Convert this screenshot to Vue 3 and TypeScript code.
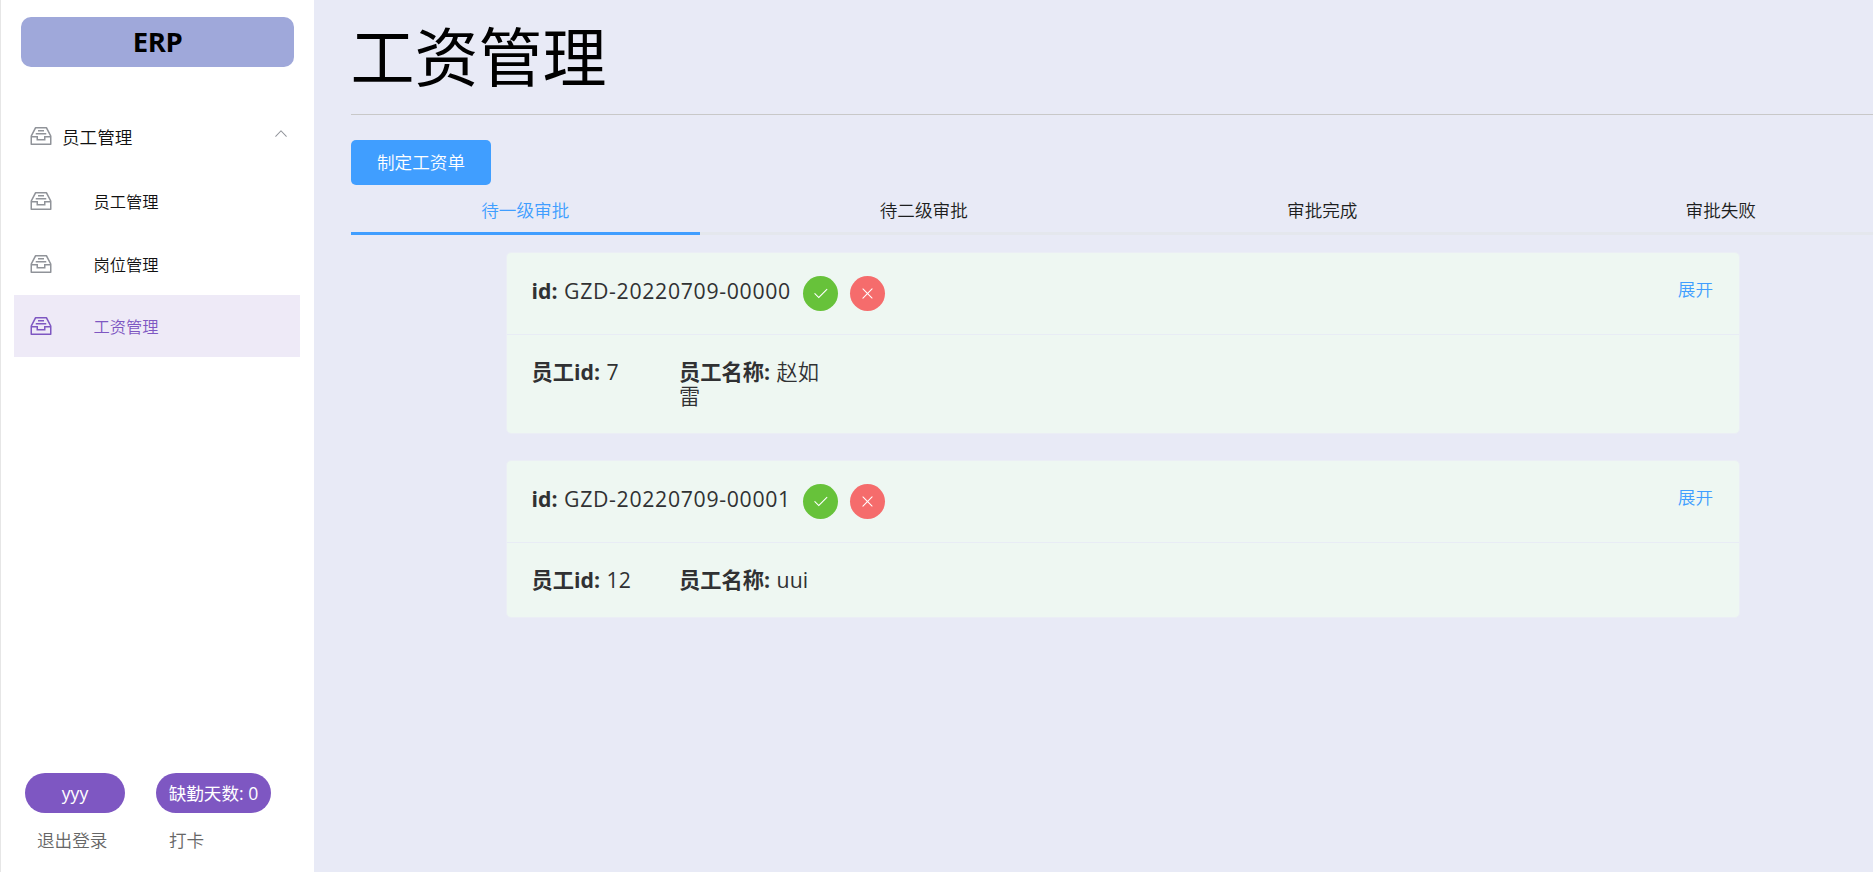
<script setup lang="ts">
interface Slip {
  id: string
  staffId: string
  name: string
}

const menu: { label: string; active: boolean }[] = [
  { label: '员工管理', active: false },
  { label: '岗位管理', active: false },
  { label: '工资管理', active: true },
]
const tabs: string[] = ['待一级审批', '待二级审批', '审批完成', '审批失败']
const slips: Slip[] = [
  { id: 'GZD-20220709-00000', staffId: '7', name: '赵如雷' },
  { id: 'GZD-20220709-00001', staffId: '12', name: 'uui' },
]

const isLatin = (text: string): boolean => /^[\x20-\x7e]+$/.test(text)

const boxPath =
  'M288 384h448v64H288v-64zm96-128h256v64H384v-64zM131.456 512H384v128h256V512h252.544L721.856 192H302.144L131.456 512zM896 576H704v128H320V576H128v256h768V576zM275.776 128h472.448a32 32 0 0 1 28.608 17.664l179.84 359.552A32 32 0 0 1 960 519.552V864a32 32 0 0 1-32 32H96a32 32 0 0 1-32-32V519.552a32 32 0 0 1 3.392-14.336l179.776-359.552A32 32 0 0 1 275.776 128z'
</script>

<template>
  <div class="layout">
    <aside class="sidebar">
      <div class="brand">ERP</div>
      <nav class="menu">
        <div class="menu-title">
          <svg class="box-icon" viewBox="0 0 1024 1024"><path :d="boxPath" /></svg>
          <span class="title-label">员工管理</span>
          <svg class="chevron" viewBox="0 0 1024 1024">
            <path
              d="m488.832 344.32-339.84 356.672a32 32 0 0 0 0 44.16l.384.384a29.44 29.44 0 0 0 42.688 0l320-335.872 319.872 335.872a29.44 29.44 0 0 0 42.688 0l.384-.384a32 32 0 0 0 0-44.16L535.168 344.32a32 32 0 0 0-46.336 0z"
            />
          </svg>
        </div>
        <div v-for="item in menu" :key="item.label" class="menu-item" :class="{ active: item.active }">
          <svg class="box-icon" viewBox="0 0 1024 1024"><path :d="boxPath" /></svg>
          <span class="item-label">{{ item.label }}</span>
        </div>
      </nav>
      <footer class="account">
        <div class="pills">
          <span class="pill user">yyy</span>
          <span class="pill absent">缺勤天数: 0</span>
        </div>
        <div class="links">
          <span class="logout">退出登录</span>
          <span>打卡</span>
        </div>
      </footer>
    </aside>

    <main class="content">
      <h1 class="heading">工资管理</h1>
      <button class="create">制定工资单</button>
      <div class="tabs">
        <div v-for="(tab, i) in tabs" :key="tab" class="tab" :class="{ current: i === 0 }">{{ tab }}</div>
      </div>
      <div class="cards">
        <section v-for="slip in slips" :key="slip.id" class="card">
          <header class="card-head">
            <span class="slip-id"><b>id:</b> <span class="code">{{ slip.id }}</span></span>
            <span class="round approve">
              <svg viewBox="0 0 1024 1024">
                <path
                  d="M406.656 706.944 195.84 496.256a32 32 0 1 0-45.248 45.248l256 256 512-512a32 32 0 0 0-45.248-45.248L406.592 706.944z"
                />
              </svg>
            </span>
            <span class="round reject">
              <svg viewBox="0 0 1024 1024">
                <path
                  d="M764.288 214.592 512 466.88 259.712 214.592a31.936 31.936 0 0 0-45.12 45.12L466.752 512 214.528 764.224a31.936 31.936 0 1 0 45.12 45.184L512 557.184l252.288 252.288a31.936 31.936 0 0 0 45.12-45.12L557.12 512.064l252.288-252.352a31.936 31.936 0 1 0-45.12-45.184z"
                />
              </svg>
            </span>
            <span class="expand">展开</span>
          </header>
          <div class="card-body">
            <div class="staff-id"><b>员工id:</b> <span class="value latin">{{ slip.staffId }}</span></div>
            <div class="staff-name">
              <b>员工名称:</b> <span class="value" :class="{ latin: isLatin(slip.name) }">{{ slip.name }}</span>
            </div>
          </div>
        </section>
      </div>
    </main>
  </div>
</template>

<style>
body {
  margin: 0;
  overflow: hidden;
}
</style>

<style scoped>
* {
  box-sizing: border-box;
}
b {
  font-weight: 700;
}
.layout {
  display: flex;
  width: 1873px;
  height: 872px;
  overflow: hidden;
  background: #e8eaf6;
  font-family: 'Open Sans', 'Noto Sans CJK SC', sans-serif;
  font-size: 17.6px;
  font-weight: 350;
  color: #303133;
}
.sidebar {
  display: flex;
  flex-direction: column;
  flex: none;
  width: 314px;
  padding-top: 17px;
  border-left: 1px solid #e6e6e6;
  background: #fff;
}
.brand {
  width: 273px;
  height: 50px;
  margin-left: 20px;
  border-radius: 10px;
  background: #9fa8da;
  color: #000;
  font-size: 27.5px;
  font-weight: 700;
  letter-spacing: -0.4px;
  line-height: 49px;
  text-align: center;
}
.menu {
  width: 286px;
  margin: 34px 0 0 13px;
}
.menu-title,
.menu-item {
  display: flex;
  align-items: center;
  padding-left: 15px;
  color: #111;
}
.menu-title {
  height: 69px;
}
.menu-item {
  height: 62.5px;
  font-size: 16.25px;
}
.menu-item:last-child {
  height: 62px;
}
.box-icon {
  flex: none;
  width: 24px;
  height: 24px;
  fill: #909399;
}
.title-label {
  margin: 1px 0 0 9px;
}
.chevron {
  width: 16px;
  height: 16px;
  margin: -5px 11.5px 0 auto;
  fill: #909399;
}
.item-label {
  margin-left: 40.5px;
}
.menu-item.active {
  background: #eeeaf7;
  color: #7e57c2;
}
.active .box-icon {
  fill: #7e57c2;
}
.account {
  margin-top: auto;
  padding: 0 0 19px 24px;
}
.pills {
  display: flex;
  gap: 31px;
}
.pill {
  height: 40px;
  border-radius: 20px;
  background: #7e57c2;
  color: #fff;
  font-weight: 400;
  line-height: 40px;
  text-align: center;
  white-space: nowrap;
}
.user {
  width: 100px;
}
.absent {
  width: 115px;
}
.links {
  display: flex;
  height: 26px;
  margin: 14px 0 0 12px;
  color: #666;
  line-height: 26px;
}
.logout {
  width: 132px;
}
.content {
  flex: none;
  width: 1581px;
  padding-left: 37px;
}
.heading {
  height: 115px;
  margin: 0;
  border-bottom: 1px solid #c8c8c8;
  color: #000;
  font-size: 64px;
  font-weight: 400;
  line-height: 113px;
  text-indent: -0.5px;
}
.create {
  display: block;
  width: 140px;
  height: 45px;
  margin-top: 25px;
  padding: 0 0 2px;
  border: 0;
  border-radius: 5px;
  background: #409eff;
  color: #fff;
  font: inherit;
}
.tabs {
  display: flex;
  gap: 50px;
  height: 50px;
  background: linear-gradient(#e4e7ed, #e4e7ed) 0 47px / 100% 3px no-repeat;
}
.tab {
  flex: 1;
  height: 50px;
  border-bottom: 3px solid transparent;
  color: #1d1e20;
  line-height: 50px;
  text-align: center;
}
.tab.current {
  border-color: #409eff;
  color: #409eff;
}
.cards {
  display: flex;
  flex-direction: column;
  gap: 26px;
  width: 1234px;
  margin: 17px 0 0 155px;
}
.card {
  border: 1px solid #ebeef5;
  border-radius: 5px;
  background: #eef7f2;
  font-size: 21.25px;
}
.card-head {
  display: flex;
  align-items: flex-start;
  height: 82px;
  padding: 23px 26px 0 24.5px;
  border-bottom: 1px solid #e8ecf5;
}
.slip-id {
  width: 271.5px;
  line-height: 29px;
  white-space: nowrap;
}
.code {
  margin-left: 1px;
  font-weight: 400;
  letter-spacing: 0.68px;
}
.value {
  margin-left: 1px;
}
.latin {
  font-weight: 400;
}
.round {
  display: flex;
  align-items: center;
  justify-content: center;
  width: 35px;
  height: 35px;
  margin-right: 12px;
  border-radius: 50%;
}
.round svg {
  width: 17px;
  height: 17px;
  fill: #fff;
}
.approve {
  background: #67c23a;
}
.reject {
  background: #f56c6c;
}
.expand {
  margin-left: auto;
  color: #409eff;
  font-size: 17.6px;
  line-height: 26px;
}
.card-body {
  display: flex;
  padding: 25px 24.5px;
  line-height: 24px;
}
.staff-id {
  width: 147.5px;
}
.staff-name {
  width: 148px;
}
</style>
